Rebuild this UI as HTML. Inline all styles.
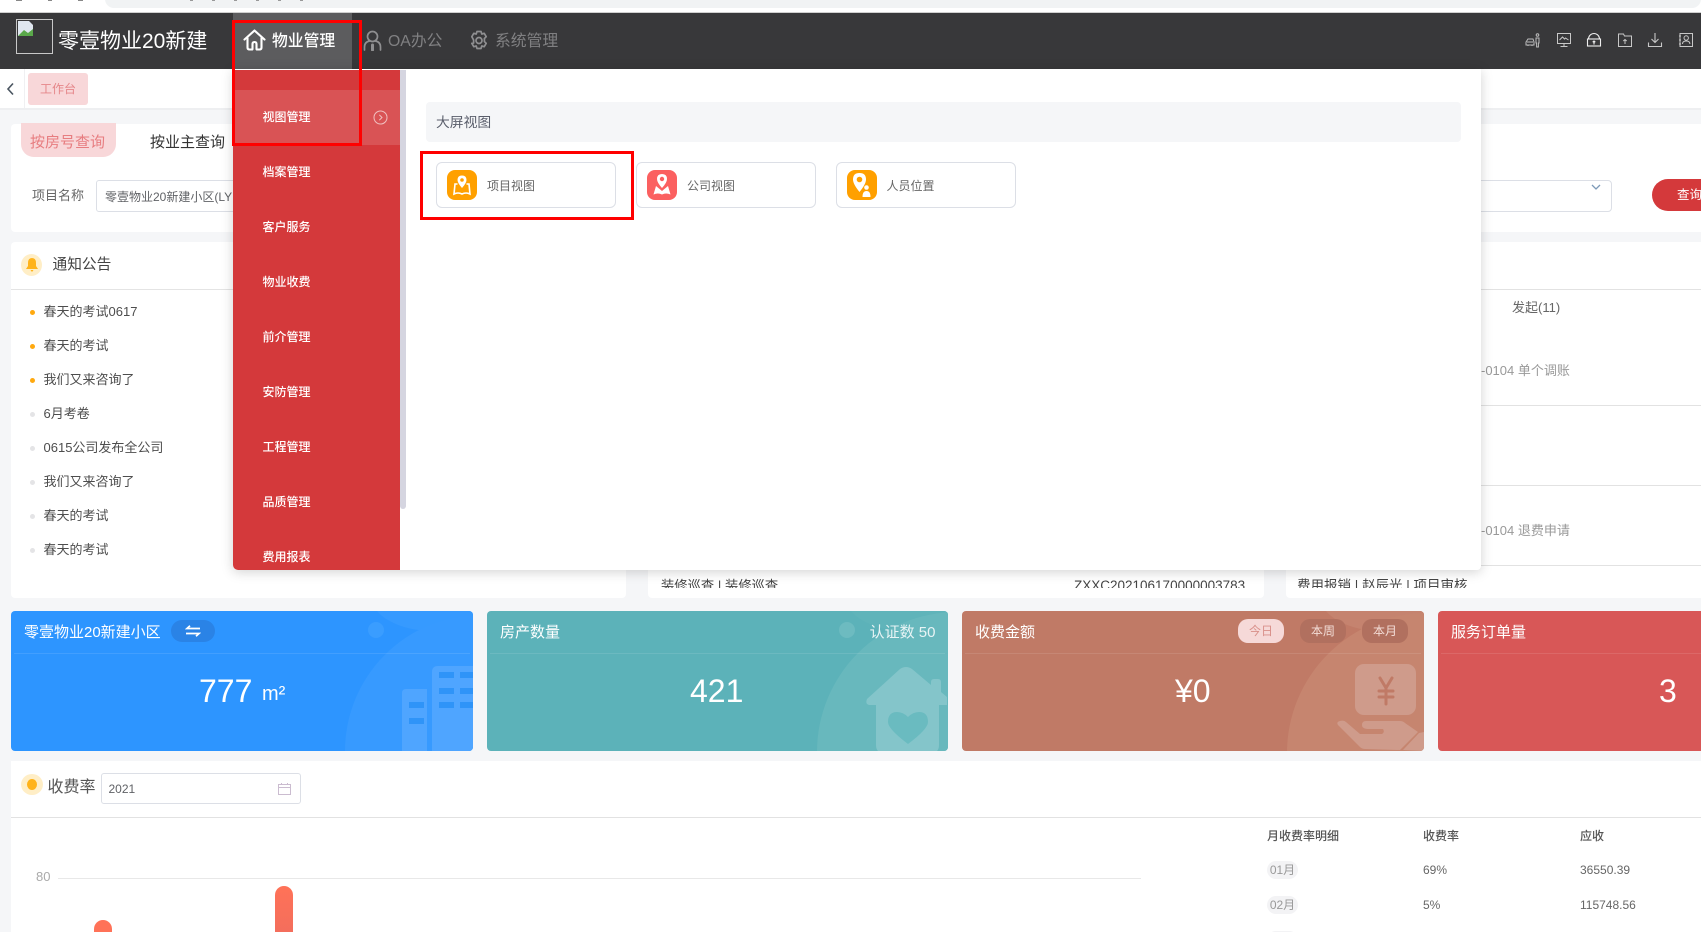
<!DOCTYPE html>
<html lang="zh-CN"><head><meta charset="utf-8"><title>零壹物业20新建</title>
<style>
*{box-sizing:border-box;margin:0;padding:0}
html,body{width:1701px;height:932px;overflow:hidden;background:#f5f6f8}
body{position:relative;font-family:"Liberation Sans","Noto Sans CJK SC",sans-serif;color:#333}
.a{position:absolute}
.t{position:absolute;white-space:nowrap;line-height:20px;transform:translateY(1px)}
.w{background:#fff}
.card{position:absolute;top:611px;height:140px;border-radius:4px;overflow:hidden;color:#fff}
.card .t{font-size:15px}
.card .dv{position:absolute;left:3px;right:3px;top:42px;height:1px;background:rgba(255,255,255,.1)}
.card .v{position:absolute;top:62px;line-height:36px;font-size:32px;white-space:nowrap}
.pill{position:absolute;top:8px;width:46px;height:24px;border-radius:10px;font-size:12px;line-height:24px;text-align:center}
.mi{position:absolute;left:0;width:167px;height:55px;line-height:55px;padding-left:29.5px;font-size:12px;font-weight:500;color:#fff}
.box{position:absolute;border:3px solid #f00;z-index:20}
.vc{position:absolute;top:162px;width:180px;height:46px;border:1px solid #dcdfe6;border-radius:6px;background:#fff}
.vc i{position:absolute;left:10px;top:7px;width:30px;height:30px;border-radius:8px;display:block}
.vc svg{position:absolute;left:0;top:0}
.vc span{position:absolute;left:50px;top:15px;font-size:12px;line-height:16px;color:#666}
.li{position:absolute;left:43.5px;font-size:13px;line-height:20px;color:#4d4d4d;white-space:nowrap;transform:translateY(1px)}
.dot{position:absolute;left:30px;width:5px;height:5px;border-radius:50%}
.hi{position:absolute;top:32px;width:16px;height:16px}
.mp{position:absolute;left:1267px;width:31px;height:18px;border-radius:9px;background:#f3f3f5;color:#999;font-size:12px;line-height:18px;text-align:center}
.td{position:absolute;font-size:12px;line-height:18px;color:#666;white-space:nowrap}
</style></head>
<body>
<!-- browser strip -->
<div class="a" style="left:0;top:0;width:1701px;height:13px;background:#fff;border-bottom:1px solid #cfcfcf"></div>
<div class="a" style="left:105px;top:-10px;width:1596px;height:18px;background:#f1f3f4;border-radius:10px"></div>
<div class="a" style="left:16px;top:0;width:6px;height:1px;background:#888"></div>
<div class="a" style="left:48px;top:0;width:4px;height:1px;background:#888"></div>
<div class="a" style="left:78px;top:0;width:5px;height:1px;background:#888"></div>
<div class="a" style="left:190px;top:0;width:130px;height:1px;background:repeating-linear-gradient(90deg,#999 0 3px,transparent 3px 22px)"></div>

<!-- header -->
<div class="a" style="left:0;top:13px;width:1701px;height:56px;background:#38383a"></div>
<div class="a" style="left:16px;top:19px;width:37px;height:35px;border:1px solid #c8c8c8"></div>
<svg class="a" style="left:18px;top:21px" width="16" height="16" viewBox="0 0 16 16"><path d="M0 0h11l4 4v11H0z" fill="#dfe6ef"/><path d="M0 15l6-6 4 3 5-4v7z" fill="#5aa94a"/></svg>
<div class="t" style="left:58px;top:29px;font-size:21px;line-height:24px;color:#fff">零壹物业20新建</div>
<div class="a" style="left:233px;top:13px;width:119px;height:56px;background:#5c5c5e"></div>
<svg class="a" style="left:243px;top:29px" width="23" height="22" viewBox="0 0 23 22" fill="none" stroke="#fff" stroke-width="2.1" stroke-linejoin="round" stroke-linecap="round"><path d="M1.5 10.5 11.5 1.5l10 9"/><path d="M4.5 9v9.5q0 2 2 2h2.5q.5 0 .5-.5v-5q0-2 2-2t2 2v5q0 .5.5.5H16.500q2 0 2-2V9"/></svg>
<div class="t" style="left:272px;top:31px;font-size:15.8px;font-weight:500;color:#fff">物业管理</div>
<svg class="a" style="left:363px;top:30px" width="19" height="21" viewBox="0 0 19 21" fill="none" stroke="#8f8f91" stroke-width="1.7" stroke-linecap="round"><circle cx="9.500" cy="6.500" r="5"/><path d="M1.500 20v-3q0-5 5-6M17.500 20v-3q0-5-5-6"/><path d="M9.500 15v5" stroke-width="3"/></svg>
<div class="t" style="left:388px;top:31px;font-size:15.800px;color:#808082">OA办公</div>
<svg class="a" style="left:469px;top:30px" width="20" height="20" viewBox="0 0 20 20" fill="none" stroke="#8f8f91" stroke-width="1.700" stroke-linejoin="round"><path d="M8 1.500h4l.8 2.500 2.400-.7 2 3.400-1.800 1.800v3l1.800 1.800-2 3.400-2.400-.7-.8 2.500H8l-.8-2.500-2.400.7-2-3.400L4.600 13v-3L2.800 6.700l2-3.400 2.400.7z"/><circle cx="10" cy="10.500" r="3"/></svg>
<div class="t" style="left:495px;top:31px;font-size:15.800px;color:#808082">系统管理</div>

<!-- header right icons -->
<svg class="hi" style="left:1525px" viewBox="0 0 16 16" fill="none" stroke="#bdbdbd" stroke-width="1"><path d="M1 13V10l2-3h5l1 3v3H1z"/><path d="M2 10h6M3 13v1M7 13v1"/><circle cx="12.500" cy="3" r="1.300"/><path d="M11 6h3v5h-.6v4h-1.800v-4H11z"/></svg>
<svg class="hi" style="left:1556px" viewBox="0 0 16 16" fill="none" stroke="#c8c8c8" stroke-width="1"><rect x="1.500" y="1.500" width="13" height="10"/><path d="M3.500 8l3-3 2 2 1-1 3 2M8 12v2M4.500 14.500h7"/></svg>
<svg class="hi" style="left:1586px" viewBox="0 0 16 16" fill="none" stroke="#eee" stroke-width="1.100"><path d="M2.500 7a5.500 5.500 0 0 1 11 0"/><rect x="1.500" y="7" width="13" height="7"/><path d="M8 9v3.500M6.700 10.200 8 9l1.300 1.200"/></svg>
<svg class="hi" style="left:1617px" viewBox="0 0 16 16" fill="none" stroke="#c8c8c8" stroke-width="1"><path d="M1.500 2h5l1 2h7v10.500h-13z"/><path d="M8 12V7.500M6.300 9 8 7.500 9.700 9"/></svg>
<svg class="hi" style="left:1647px" viewBox="0 0 16 16" fill="none" stroke="#c8c8c8" stroke-width="1.100"><path d="M8 1v9M4.500 7 8 10.500 11.500 7M1.500 10.500v4h13v-4"/></svg>
<svg class="hi" style="left:1678px" viewBox="0 0 16 16" fill="none" stroke="#c8c8c8" stroke-width="1"><rect x="2" y="1.500" width="12.500" height="13"/><circle cx="8.200" cy="6" r="2.200"/><path d="M4.500 12q0-3 3.700-3t3.700 3M1 4h2M1 8h2M1 12h2"/></svg>

<!-- tab row -->
<div class="a w" style="left:0;top:69px;width:1701px;height:39px"></div>
<div class="a" style="left:0;top:108px;width:1701px;height:2px;background:#eeeff1"></div>
<div class="a" style="left:24px;top:69px;width:1px;height:39px;background:#f0f0f2"></div>
<svg class="a" style="left:6px;top:82px" width="9" height="14" viewBox="0 0 9 14" fill="none" stroke="#4a5560" stroke-width="1.600"><path d="M7 1.500 2 7l5 5.500"/></svg>
<div class="a" style="left:28px;top:73px;width:60px;height:32px;background:#f8d7d9;border-radius:3px;text-align:center;line-height:32px;font-size:12px;color:#e58689">工作台</div>

<!-- search card -->
<div class="a w" style="left:11px;top:124px;width:1700px;height:108px;border-radius:4px"></div>
<div class="a" style="left:21px;top:123px;width:95px;height:34px;background:#f8d7d9;border-radius:0 0 13px 13px"></div>
<div class="t" style="left:30px;top:132px;font-size:15px;color:#e77d80">按房号查询</div>
<div class="t" style="left:150px;top:132px;font-size:15px;color:#333">按业主查询</div>
<div class="t" style="left:32px;top:185px;font-size:13px;color:#666">项目名称</div>
<div class="a" style="left:96px;top:180px;width:200px;height:32px;border:1px solid #dcdfe6;border-radius:3px"></div>
<div class="t" style="left:105px;top:186px;font-size:12px;color:#606266">零壹物业20新建小区(LY</div>
<div class="a" style="left:1400px;top:180px;width:212px;height:32px;border:1px solid #dcdfe6;border-radius:0 4px 4px 0"></div>
<svg class="a" style="left:1591px;top:184px" width="10" height="7" viewBox="0 0 10 7" fill="none" stroke="#7d9ab8" stroke-width="1.300"><path d="M1 1l4 4 4-4"/></svg>
<div class="a" style="left:1652px;top:179px;width:80px;height:32px;border-radius:16px;background:#d4393b"></div>
<div class="t" style="left:1677px;top:184px;font-size:12.500px;color:#fff">查询</div>

<!-- notice card -->
<div class="a w" style="left:11px;top:242px;width:615px;height:356px;border-radius:4px"></div>
<div class="a" style="left:21px;top:254px;width:21px;height:22px;border-radius:50%;background:#ffeec6"></div>
<svg class="a" style="left:26px;top:258px" width="12" height="14" viewBox="0 0 12 14"><path d="M6 0q4 0 4 5v3l2 3H0l2-3V5q0-5 4-5zM4.500 12h3L6 14z" fill="#ffb31a"/></svg>
<div class="t" style="left:52.500px;top:254px;font-size:14.700px;color:#444">通知公告</div>
<div class="a" style="left:11px;top:289px;width:615px;height:1px;background:#e4e4e4"></div>
<div class="dot" style="top:310px;background:#ffa90f"></div><div class="li" style="top:301px">春天的考试0617</div>
<div class="dot" style="top:344px;background:#ffa90f"></div><div class="li" style="top:335px">春天的考试</div>
<div class="dot" style="top:378px;background:#ffa90f"></div><div class="li" style="top:369px">我们又来咨询了</div>
<div class="dot" style="top:412px;background:#e4e4e6"></div><div class="li" style="top:403px">6月考卷</div>
<div class="dot" style="top:446px;background:#e4e4e6"></div><div class="li" style="top:437px">0615公司发布全公司</div>
<div class="dot" style="top:480px;background:#e4e4e6"></div><div class="li" style="top:471px">我们又来咨询了</div>
<div class="dot" style="top:514px;background:#e4e4e6"></div><div class="li" style="top:505px">春天的考试</div>
<div class="dot" style="top:548px;background:#e4e4e6"></div><div class="li" style="top:539px">春天的考试</div>

<!-- middle card -->
<div class="a w" style="left:648px;top:242px;width:615.500px;height:356px;border-radius:4px;overflow:hidden">
 <div class="t" style="left:13px;top:333px;font-size:13.300px;color:#444;height:12px;overflow:hidden;line-height:20px">装修巡查 | 装修巡查</div>
 <div class="t" style="left:426px;top:333px;font-size:13.500px;color:#444;height:12px;overflow:hidden;line-height:20px">ZXXC202106170000003783</div>
</div>
<!-- right card -->
<div class="a w" style="left:1286px;top:242px;width:430px;height:356px;border-radius:4px;overflow:hidden">
 <div class="a" style="left:0;top:47px;width:430px;height:1px;background:#e2e2e2"></div>
 <div class="a" style="left:0;top:163px;width:430px;height:1px;background:#e2e2e2"></div>
 <div class="a" style="left:0;top:243px;width:430px;height:1px;background:#e2e2e2"></div>
 <div class="a" style="left:0;top:323px;width:430px;height:1px;background:#e2e2e2"></div>
 <div class="t" style="left:226px;top:55px;font-size:13px;color:#666">发起(11)</div>
 <div class="t" style="left:195px;top:118px;font-size:13px;color:#999">-0104 单个调账</div>
 <div class="t" style="left:195px;top:278px;font-size:13px;color:#999">-0104 退费申请</div>
 <div class="t" style="left:11px;top:333px;font-size:13.500px;color:#444;height:12px;overflow:hidden">费用报销 | 赵辰光 | 项目审核</div>
</div>

<!-- stat cards -->
<div class="card" style="left:11px;width:462px;background:#2d95ff">
 <svg class="a" style="left:0;top:0" width="462" height="140"><ellipse cx="422" cy="-15" rx="62" ry="35" fill="#369aff"/><circle cx="470" cy="140" r="136" fill="#379aff"/><circle cx="365" cy="19" r="8" fill="#3a9dff"/>
 <path d="M391 82q0-4 4-4h21v62h-25z" fill="#4fa5ff"/><path d="M421 61q0-6 6-6h35v85h-41z" fill="#4fa5ff"/>
 <g fill="#2f94f8"><rect x="398" y="91" width="15" height="6"/><rect x="398" y="107" width="15" height="6"/><rect x="428" y="61" width="15" height="6"/><rect x="449" y="61" width="13" height="6"/><rect x="428" y="77" width="15" height="6"/><rect x="449" y="77" width="13" height="6"/><rect x="428" y="91" width="15" height="6"/><rect x="449" y="91" width="13" height="6"/></g></svg>
 <div class="dv"></div>
 <div class="t" style="left:13px;top:11px">零壹物业20新建小区</div>
 <div class="a" style="left:160px;top:9px;width:44px;height:22px;border-radius:11px;background:#2a83e6"></div>
 <svg class="a" style="left:174px;top:14px" width="16" height="12" viewBox="0 0 16 12" fill="none" stroke="#fff" stroke-width="1.700"><path d="M15 3.500H2L5 .8M1 8.500h13L11 11.200"/></svg>
 <div class="v" style="left:188px">777</div>
 <div class="a" style="left:251px;top:71px;font-size:20px;line-height:24px">m²</div>
</div>
<div class="card" style="left:487px;width:461px;background:#5cb2b9">
 <svg class="a" style="left:0;top:0" width="461" height="140"><ellipse cx="420" cy="-15" rx="62" ry="35" fill="#60b4ba"/><circle cx="470" cy="141" r="140" fill="#68b8bd"/><circle cx="360" cy="19" r="8" fill="#6dbbc0"/>
 <path d="M414 58q6-4 12 0l19 16v-3q0-3 3-3h4q3 0 3 3v10l6 5v8h-8v40q0 8-8 8h-47q-8 0-8-8V94h-7q-4-1-2-6z" fill="#84c5ca" transform="translate(-1 0)"/><path d="M421 106q-5-5-11-5-9 0-9 10 0 7 20 22 20-15 20-22 0-10-9-10-6 0-11 5z" fill="#6abbc0"/></svg>
 <div class="dv"></div>
 <div class="t" style="left:13px;top:11px">房产数量</div>
 <div class="t" style="right:12.500px;top:11px;color:#e8f4f5">认证数 50</div>
 <div class="v" style="left:203px">421</div>
</div>
<div class="card" style="left:962px;width:462px;background:#c07a66">
 <svg class="a" style="left:0;top:0" width="462" height="140"><ellipse cx="420" cy="-15" rx="62" ry="35" fill="#c5836f"/><circle cx="465" cy="142" r="140" fill="#c6856f"/>
 <rect x="393" y="53" width="61" height="51" rx="9" fill="#cf9b8b"/><path d="M418 67l6 10 6-10M424 77v16M417 80h14M417 86h14" fill="none" stroke="#c07a66" stroke-width="3" stroke-linecap="round"/>
 <path d="M376 114q-2-3 2-4t6 1l14 12h22q3-2 1-5h-14q-7 0-7-4 0-4 4-4h34q3 0 5 2l13 9-18 18-35-1q-3 0-5-2zM441 139l16-17 5-1v19z" fill="#cf9b8b"/></svg>
 <div class="dv"></div>
 <div class="t" style="left:13px;top:11px">收费金额</div>
 <div class="pill" style="left:276px;background:#f6d9d8;color:#d9908a">今日</div>
 <div class="pill" style="left:338px;background:#b1705f;color:#f3ddd7">本周</div>
 <div class="pill" style="left:400px;background:#b1705f;color:#f3ddd7">本月</div>
 <div class="v" style="left:213px">¥0</div>
</div>
<div class="card" style="left:1438px;width:300px;background:#d85757">
 <div class="a" style="left:3px;width:297px;top:42px;height:1px;background:rgba(255,255,255,.1)"></div>
 <div class="t" style="left:13px;top:11px">服务订单量</div>
 <div class="v" style="left:221px">3</div>
</div>

<!-- chart -->
<div class="a w" style="left:11px;top:761px;width:1700px;height:180px"></div>
<div class="a" style="left:21px;top:774px;width:22px;height:21px;border-radius:50%;background:#ffeec6"></div>
<div class="a" style="left:27px;top:779px;width:10px;height:11px;border-radius:50%;background:#ffb31a"></div>
<div class="t" style="left:47.500px;top:777px;font-size:16px;color:#555">收费率</div>
<div class="a" style="left:101px;top:773px;width:200px;height:31px;border:1px solid #dcdfe6;border-radius:3px"></div>
<div class="t" style="left:108.500px;top:778px;font-size:12px;color:#606266">2021</div>
<svg class="a" style="left:278px;top:783px" width="13" height="12" viewBox="0 0 13 12" fill="none" stroke="#cbbcd0" stroke-width="1"><rect x=".5" y="1.500" width="12" height="10"/><path d="M.5 4.500h12M3.500 0v2M9.500 0v2"/></svg>
<div class="a" style="left:11px;top:817px;width:1690px;height:1px;background:#e2e2e2"></div>
<div class="t" style="left:36px;top:866px;font-size:13px;color:#aaa">80</div>
<div class="a" style="left:58px;top:878px;width:1083px;height:1px;background:#e8e8e8"></div>
<div class="a" style="left:94px;top:920px;width:18px;height:30px;border-radius:9px 9px 0 0;background:#ff7258"></div>
<div class="a" style="left:275px;top:886px;width:18px;height:60px;border-radius:9px 9px 0 0;background:linear-gradient(#ff7258,#f06d5d)"></div>
<div class="td" style="left:1267px;top:827px;color:#555;font-weight:500">月收费率明细</div>
<div class="td" style="left:1423px;top:827px;color:#555;font-weight:500">收费率</div>
<div class="td" style="left:1580px;top:827px;color:#555;font-weight:500">应收</div>
<div class="mp" style="top:861px">01月</div><div class="td" style="left:1423px;top:861px">69%</div><div class="td" style="left:1580px;top:861px">36550.39</div>
<div class="mp" style="top:896px">02月</div><div class="td" style="left:1423px;top:896px">5%</div><div class="td" style="left:1580px;top:896px">115748.56</div>
<div class="mp" style="top:931px"></div>

<!-- dropdown -->
<div class="a" style="left:233px;top:69px;width:1248px;height:501px;background:#fff;border-radius:0 0 4px 4px;box-shadow:0 2px 12px rgba(0,0,0,.18);z-index:10;overflow:hidden">
 <div class="a" style="left:0;top:1px;width:167px;height:500px;background:#d4393b;border-radius:0 0 0 5px;overflow:hidden">
  <div class="mi" style="top:20px;background:#d95355">视图管理</div>
  <div class="mi" style="top:75px">档案管理</div>
  <div class="mi" style="top:130px">客户服务</div>
  <div class="mi" style="top:185px">物业收费</div>
  <div class="mi" style="top:240px">前介管理</div>
  <div class="mi" style="top:295px">安防管理</div>
  <div class="mi" style="top:350px">工程管理</div>
  <div class="mi" style="top:405px">品质管理</div>
  <div class="mi" style="top:460px">费用报表</div>
  <svg class="a" style="left:140px;top:39.500px" width="15" height="15" viewBox="0 0 15 15" fill="none" stroke="#f0c0c0" stroke-width="1"><circle cx="7.500" cy="7.500" r="6.500"/><path d="M6.300 4.800 9 7.500 6.300 10.200"/></svg>
 </div>
 <div class="a" style="left:167px;top:1px;width:6px;height:439px;background:#d5d5e0;border-radius:0 0 3px 3px"></div>
 <div class="a" style="left:193px;top:33px;width:1035px;height:40px;background:#f5f6f8;border-radius:4px"></div>
 <div class="t" style="left:203px;top:43px;font-size:13.800px;color:#5a5e6b">大屏视图</div>
</div>
<div class="vc" style="left:436px;z-index:11"><i style="background:#ffa000"></i>
 <svg width="60" height="44" viewBox="0 0 60 44" fill="none"><path d="M25 12.500q-4.500 0-4.500 4.500 0 3 4.500 8 4.500-5 4.500-8 0-4.500-4.500-4.500z" fill="#fff"/><circle cx="25" cy="17" r="1.800" fill="#ffa000"/><path d="M20.500 21H18L17 31q4-2 8 0 4-2 8 0l-1-10h-2.500" stroke="#fff" stroke-width="1.600"/></svg><span>项目视图</span></div>
<div class="vc" style="left:636px;z-index:11"><i style="background:#fb6060"></i>
 <svg width="60" height="44" viewBox="0 0 60 44"><path d="M25 11q-5 0-5 5 0 3.500 5 9 5-5.500 5-9 0-5-5-5z" fill="#fff"/><circle cx="25" cy="16" r="2.200" fill="#fb6060"/><path d="M19 23l-2.500 8.500q4.500-2 8.500 0 4-2 8.500 0L31 23l-6 5z" fill="#fff"/></svg><span>公司视图</span></div>
<div class="vc" style="left:835.500px;z-index:11"><i style="background:#ffa000"></i>
 <svg width="60" height="44" viewBox="0 0 60 44"><path d="M22.500 10q-6.500 0-6.500 6.500 0 4.500 6.500 12.500 6.500-8 6.500-12.500Q29 10 22.500 10z" fill="#fff"/><circle cx="22.500" cy="16.500" r="2.800" fill="#ffa000"/><circle cx="29.500" cy="24.500" r="2.300" fill="#fff"/><path d="M25.500 34q0-6 4-6t4 6z" fill="#fff"/></svg><span>人员位置</span></div>

<!-- annotations -->
<div class="box" style="left:232px;top:20px;width:130px;height:126px"></div>
<div class="box" style="left:420px;top:151px;width:214px;height:69px"></div>
</body></html>
